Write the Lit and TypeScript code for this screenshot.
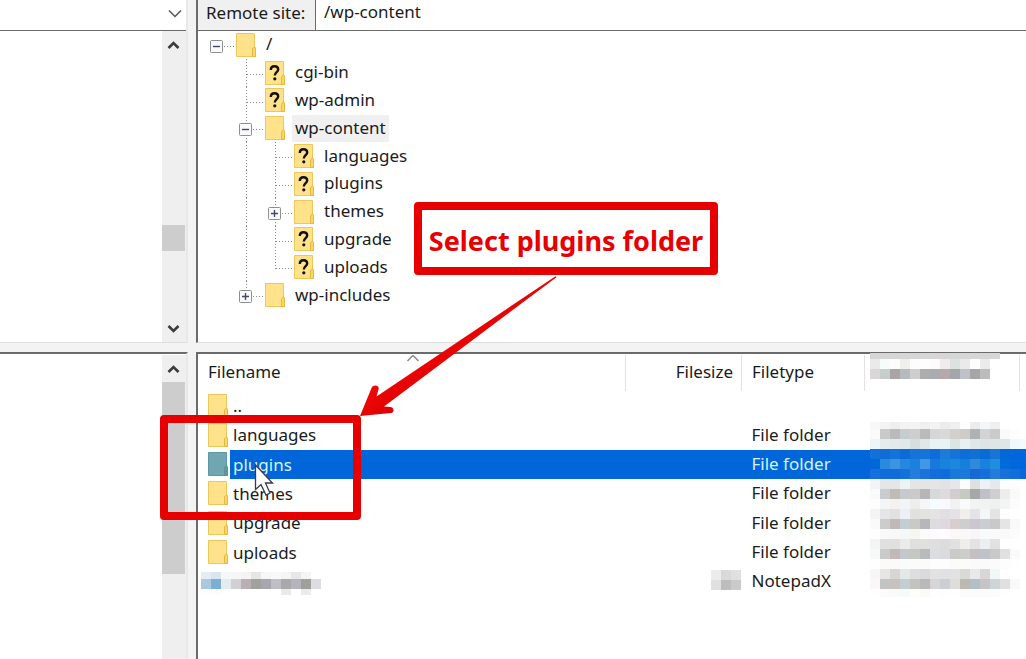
import { LitElement, html, svg, css, nothing } from "lit";
import { customElement } from "lit/decorators.js";
import { classMap } from "lit/directives/class-map.js";

type Knob = "plus" | "minus" | "";
type Guide = "line" | "gap";

interface TreeNode {
  name: string;
  guides: Guide[];
  stem: "none" | "through" | "end";
  knob: Knob;
  unknown?: boolean;
  current?: boolean;
}

const TREE: TreeNode[] = [
  { name: "/", guides: [], stem: "none", knob: "minus" },
  { name: "cgi-bin", guides: ["gap"], stem: "through", knob: "", unknown: true },
  { name: "wp-admin", guides: ["gap"], stem: "through", knob: "", unknown: true },
  { name: "wp-content", guides: ["gap"], stem: "through", knob: "minus", current: true },
  { name: "languages", guides: ["gap", "line"], stem: "through", knob: "", unknown: true },
  { name: "plugins", guides: ["gap", "line"], stem: "through", knob: "", unknown: true },
  { name: "themes", guides: ["gap", "line"], stem: "through", knob: "plus" },
  { name: "upgrade", guides: ["gap", "line"], stem: "through", knob: "", unknown: true },
  { name: "uploads", guides: ["gap", "line"], stem: "end", knob: "", unknown: true },
  { name: "wp-includes", guides: ["gap"], stem: "end", knob: "plus" },
];

const FILES = [
  { name: "..", type: "" },
  { name: "languages", type: "File folder" },
  { name: "plugins", type: "File folder", selected: true },
  { name: "themes", type: "File folder" },
  { name: "upgrade", type: "File folder" },
  { name: "uploads", type: "File folder" },
  { name: "", type: "NotepadX" },
];

/* Colour blocks of the hidden date column: top, height, then one colour per 10px cell. */
const DATE_BLOCKS: [number, number, string][] = [
  [0, 6, "d6d6d6 d6d6d6 d6d6d6 d6d6d6 d6d6d6 d6d6d6 d6d6d6 d6d6d6 d6d6d6 d6d6d6 d6d6d6 d6d6d6 d6d6d6"],
  [6, 10, "ebe9e9 f6fcfa fcfcfa efefeb fdfdfd fefefe fcfcfc f1ebec dce2df e9ebea fdfdfd ebebec"],
  [16, 10, "d9d7d7 c6cdcb aaa4a6 b4babf cdcfce adadac abacb1 b5a9ac a5a6ac bec1c8 a6a6a6 bcbcbd"],
  [69, 7, "f8f8f8 f3f3f3 eeeeee f3f3f3 f3f3f3 f0f0f0 f3f3f3 ececec f0f0f0 fefefe ececec f2f8f9 f0f0f0"],
  [76, 10, "fafafa c9c9c9 bababa c5cdcf cdcfcf bababa d5d6d8 d8d9d8 d2cfcd cfccc8 adb2b5 d3d3d3 cacaca fafafa fdfdfd"],
  [86, 10, "edf5f8 e5ecee e2eaec e0e8e9 d7dedf e1e8e8 eaf3f4 e9f2f4 dbe5e4 e8f1f2 dfe7e9 dce4e6 dde5e6 dfe6e8 f1f9fc f2fbfd"],
  [96, 10, "1170d9 0f6dd8 1273da 0c6bd8 1474da 1574da 0e6dd8 1c7cdc 1574d9 0e6ed9 1170d4 096bd5 1875d7 0268d9 0066dc 0066dc"],
  [106, 10, "0068d9 2a8ae0 3d94df 2687de 1c80dd 4199e5 1878dc 1982dd 1b87de 1380dd 308ad9 1882de 1f8de0 006bd9 0068dd 0066dc"],
  [116, 10, "176fdf 136bd9 136bd9 1571da 257cdf 1d73dc 146dda 116cdb 1c78d8 1d78da 1669d4 156eda 237cd9 1870d8 146ddc 0b66db"],
  [126, 10, "f2f4f7 e5e6e8 e4e6e7 edf3f3 e4e5e5 e4e5e5 e5e5e5 e2e3e5 e7e7e9 f9fefd dee1df edf0f5 e6e8eb fcfdfd fdfdfd"],
  [136, 10, "fafafa c8ccd0 bebcb4 c7c9cc cbcaca b8b4b8 d5d8dd e0dadd d2cecd c5cac0 a5a8a8 c1c0c8 cfcfcf ededed fafafa"],
  [146, 10, "fdfdfd f3f5f7 f5f1f1 f2f5f7 edeeec f6f6f6 f5fcff f9faff f2f2f2 fafafa f2f3f3 f1f3f2 eff0f1 f2f5f4 fcfcfc"],
  [156, 10, "f4f4f4 e5e5e7 e1e1df eceff5 e1e2df e2e2e0 e5e4e3 e1dfe3 e4e2e5 f0efeb e4e3e6 f4f6f9 e4e4e4 fefefe"],
  [166, 10, "fafafa cdcccc c0b9b8 c4cdd1 c9cac5 b6b7bb dedcdf dfd9df d7cecd cecfcc cbc6cf cbced0 c9c8ca e5e5e5 f9f9f9"],
  [176, 10, "fefefe f9f9f9 f8f8f9 f6f8f8 f5f6f0 fafbfa fdfbfd fefcfe fbf8f8 faf8f8 f8f6f9 f8fafb fafafa fafafa fcfcfc"],
  [186, 10, "f4f4f4 e1e0e1 e2dfdf ebebeb dfdfdd e0e0de dfdfdf dcdcdc e2e1e1 f0eeec e3e3e3 edeeef e1e1e1 ffffff"],
  [196, 10, "f6f9f8 cacaca c1b9b9 c4c8cd c5c7c2 b8babb dcdde2 dbdbdf cacbc7 cdcdca c3bfc2 bfc2c8 c9c9c9 e1e0df fafafa"],
  [206, 10, "fefefe fafafa fbfaf9 fafbfc fbfbf9 fbfbfb fdfdfd fdfdfd fbfbf9 fbfbfa fafafa fafafb fbfbfb fdfdfd fefefe"],
  [216, 10, "f7f5f6 e7e6e5 d6d6d5 e4e9e8 dedde0 dadadc e3e1e2 e0e1e2 e1e2e1 d9dad6 e8e9e8 d8d6d8 f2f8f8"],
  [226, 10, "fbf7f8 c2c3c2 c8c2bf c4cdd1 c2c3bf b8b9b9 d7d6d7 cccfd1 dfddda bcb8b2 b2c0c6 c6c4c7 cdd6d5 e1e0e1 f9f9f9"],
  [236, 8, "fefefe fbfbfb fafafa f7fafa fdfdf9 fafafa fefefe fdfdfd fefefe fbfbf9 f9fbfc fbfbfb fbfdfd fefefe"],
];

const NAME_BLOCKS: [number, number, string][] = [
  [0, 7, "e6edf2 dae6ee f5f8fa f8f7f7 f5f3f3 e7e6e6 f6f6f6 f8f8f8 f5f5f5 e8e7e8 f5f5f5 ffffff"],
  [7, 10, "a8cae0 7bafd4 e5ecf1 d3d0d3 bab0b4 a1a19d a8a6ae bfbec4 aba8aa b3b4bc 9f9f9b dedde3"],
  [17, 6, "fdfdfd fafcfd ffffff ffffff ffffff ffffff ffffff ffffff ebe9ea ffffff ebebe9 ffffff"],
];

const SIZE_BLOCKS: [number, number, string][] = [
  [0, 10, "ececec d9d9d9 e0e0e0"],
  [10, 10, "e0e0e0 bdbdbd cacaca"],
];

const mosaic = (cls: string, rows: [number, number, string][]) => {
  const width = Math.max(...rows.map((r) => r[2].split(" ").length)) * 10;
  const last = rows[rows.length - 1];
  const height = last[0] + last[1];
  return html`<svg class=${cls} width=${width} height=${height} shape-rendering="crispEdges" aria-hidden="true">
    ${rows.map(([y, h, cells]) =>
      cells.split(" ").map((c, i) => svg`<rect x=${i * 10} y=${y} width="10" height=${h} fill=${"#" + c}></rect>`)
    )}
  </svg>`;
};

const folder = (unknown = false, tinted = false) => html`<svg class="folder" width="20" height="24" viewBox="0 0 20 24" aria-hidden="true">
  <path d="M0.5 0.5H18.5V14L19.5 16V23.5H0.5Z" fill=${tinted ? "#6fa7b1" : "#ffe28a"} stroke=${tinted ? "#5d97a8" : "#edc65c"}></path>
  <path d="M16.5 23.5V16L18.5 13.5L19.5 15.5V23.5Z" fill=${tinted ? "#5f9a9f" : "#fbd663"} stroke=${tinted ? "#5b8f92" : "#e6b83f"}></path>
  ${unknown
    ? svg`<path d="M5.8 9C5.8 6.200 7.500 5.200 9.500 5.200C11.800 5.200 13.200 6.600 13.200 8.500C13.200 11.200 9.800 11.300 9.800 14.600" fill="none" stroke="#111" stroke-width="2.400"></path><circle cx="9.800" cy="17.800" r="1.600" fill="#111"></circle>`
    : nothing}
</svg>`;

const chevron = (dir: "up" | "down") => html`<svg width="13" height="10" viewBox="0 0 13 10" aria-hidden="true">
  <path d=${dir === "up" ? "M1.500 8L6.500 3L11.500 8" : "M1.500 2L6.500 7L11.500 2"} fill="none" stroke="#3c3c3c" stroke-width="2.600"></path>
</svg>`;

@customElement("site-tree")
class SiteTree extends LitElement {
  static styles = css`
    :host {
      display: block;
      flex: 1;
      min-width: 0;
      padding-left: 12px;
    }
    .tree {
      display: grid;
      grid-auto-rows: 1fr;
      height: 278px;
      margin: 0;
      padding: 0;
      list-style: none;
    }
    .node {
      display: flex;
      align-items: center;
      white-space: nowrap;
      min-height: 0;
    }
    .guide {
      flex: none;
      align-self: stretch;
      overflow: visible;
    }
    .folder {
      flex: none;
    }
    .label {
      margin-left: 7px;
      padding: 0 3px 2px;
      line-height: 25px;
    }
    .current {
      background: #f0f0f0;
    }
  `;

  private branch(n: TreeNode) {
    return html`<svg class="guide" width="26" height="28" aria-hidden="true">
      <g fill="none" stroke="#8a8a8a" stroke-dasharray="1 2">
        ${n.stem !== "none" ? svg`<path d=${n.stem === "through" ? "M7.500 0V28" : "M7.500 0V16"}></path>` : nothing}
        <path d="M8 15.500H25"></path>
      </g>
      ${n.knob
        ? svg`<rect x="0.500" y="9.500" width="12" height="12" rx="1" fill="#fafafa" stroke="#8e8e8e"></rect>
            <path d=${n.knob === "plus" ? "M3 15.500H10M6.500 12V19" : "M3 15.500H10"} stroke="#3f4a6b" stroke-width="1.400"></path>`
        : nothing}
    </svg>`;
  }

  render() {
    return html`<ul class="tree" role="tree">
      ${TREE.map(
        (n) => html`<li class="node" role="treeitem">
          ${n.guides.map(
            (_, i) => html`<svg class="guide" width="29" height="28" aria-hidden="true">
              ${n.guides[i + 1] === "line" || (n.guides[i] === "line" && i > 0)
                ? svg`<path d=${i > 0 ? "M7.500 0V28" : ""} stroke="#8a8a8a" stroke-dasharray="1 2"></path>`
                : nothing}
            </svg>`
          )}
          ${this.branch(n)}${folder(n.unknown)}
          <span class=${classMap({ label: true, current: !!n.current })}>${n.name}</span>
        </li>`
      )}
    </ul>`;
  }
}

@customElement("file-list")
class FileList extends LitElement {
  static styles = css`
    :host {
      display: block;
      position: relative;
    }
    .files {
      width: 100%;
      height: 241px;
      table-layout: fixed;
      border-collapse: collapse;
      white-space: nowrap;
    }
    .head {
      height: 36px;
    }
    th {
      padding: 0 10px 2px;
      font-weight: 400;
      text-align: left;
      border-right: 1px solid #e2e2e2;
    }
    td {
      padding: 0 10px;
    }
    .size {
      width: 116px;
      box-sizing: border-box;
      padding: 0 8px 2px;
      text-align: right;
    }
    .type {
      width: 123px;
      box-sizing: border-box;
    }
    .date {
      width: 155px;
      box-sizing: border-box;
    }
    .rest {
      width: 6px;
      padding: 0;
      border: 0;
    }
    .name {
      padding: 0 0 0 10px;
    }
    .entry {
      display: flex;
      align-items: center;
      height: 29px;
    }
    .folder {
      flex: none;
      margin-right: 2px;
    }
    .text {
      flex: 1;
      padding-left: 3px;
      line-height: 29px;
    }
    .selected td {
      color: #d5f4ff;
      background: #0066da;
    }
    .selected .name {
      background: none;
    }
    .selected .text {
      background: #0066da;
    }
    .sort {
      position: absolute;
      top: 0;
      left: 208px;
    }
    .dates {
      position: absolute;
      top: -2px;
      right: -4px;
    }
    .hidden-name {
      position: absolute;
      top: 217px;
      left: 3px;
    }
    .hidden-size {
      position: absolute;
      top: 215px;
      right: 285px;
    }
  `;

  render() {
    return html`
      <table class="files">
        <thead>
          <tr class="head">
            <th>Filename</th>
            <th class="size">Filesize</th>
            <th class="type">Filetype</th>
            <th class="date"></th>
            <th class="rest"></th>
          </tr>
        </thead>
        <tbody>
          ${FILES.map(
            (f) => html`<tr class=${classMap({ selected: !!f.selected })}>
              <td class="name">
                <div class="entry">${f.name ? folder(false, f.selected) : nothing}<span class="text">${f.name}</span></div>
              </td>
              <td class="size"></td>
              <td>${f.type}</td>
              <td></td>
              <td class="rest"></td>
            </tr>`
          )}
        </tbody>
      </table>
      <svg class="sort" width="14" height="8" viewBox="0 0 14 8" aria-hidden="true">
        <path d="M1.500 6L7 0.500L12.500 6" fill="none" stroke="#8b8b8b" stroke-width="1.500"></path>
      </svg>
      ${mosaic("dates", DATE_BLOCKS)} ${mosaic("hidden-name", NAME_BLOCKS)} ${mosaic("hidden-size", SIZE_BLOCKS)}
    `;
  }
}

@customElement("app-root")
class AppRoot extends LitElement {
  static styles = css`
    :host {
      display: block;
      position: relative;
      height: 100vh;
      overflow: hidden;
      background: #f3f3f3;
      color: #1b1b1b;
      font: 17px/24px "Noto Sans", "Open Sans", sans-serif;
    }
    .window {
      display: grid;
      grid-template-columns: 188px minmax(0, 1fr);
      grid-template-rows: 343px minmax(0, 1fr);
      column-gap: 8px;
      row-gap: 9px;
      height: 100%;
    }
    .pane {
      display: flex;
      flex-direction: column;
      min-width: 0;
      min-height: 0;
      box-sizing: border-box;
      background: #fff;
    }
    .local {
      border-right: 2px solid #e8e8e8;
    }
    .remote {
      border-left: 2px solid #6b6b6b;
    }
    .upper {
      border-bottom: 1px solid #dedede;
    }
    .lower {
      border-top: 2px solid #6b6b6b;
      padding-top: 1px;
    }
    .bar {
      display: flex;
      flex: none;
      height: 30px;
      box-sizing: content-box;
      border-bottom: 1px solid #6b6b6b;
    }
    .drop {
      position: relative;
      display: flex;
      flex: 1;
    }
    .drop select {
      flex: 1;
      border: 0;
      background: none;
      appearance: none;
    }
    .drop svg {
      position: absolute;
      right: 4px;
      top: 9px;
      pointer-events: none;
    }
    .site {
      flex: none;
      box-sizing: border-box;
      width: 118px;
      padding: 0 8px;
      line-height: 25px;
      background: #f0f0f0;
      border-right: 1px solid #6b6b6b;
      white-space: nowrap;
    }
    .path {
      flex: 1;
      min-width: 0;
      padding: 0 8px;
      height: 24px;
      border: 0;
      outline: 0;
      background: none;
      color: inherit;
      font: inherit;
    }
    .body {
      display: flex;
      flex: 1;
      min-height: 0;
      justify-content: flex-end;
    }
    .scroll {
      display: flex;
      flex-direction: column;
      width: 24px;
      background: #efefef;
    }
    .arrow {
      display: flex;
      flex: none;
      align-items: center;
      justify-content: center;
      width: 22px;
      height: 27px;
      padding: 0;
      border: 0;
      background: none;
    }
    .thumb {
      flex: none;
      width: 23px;
      background: #cdcdcd;
    }
    .short {
      height: 26px;
    }
    .long {
      height: 192px;
    }
    .before {
      flex: 13;
    }
    .after {
      flex: 5;
    }
    .overlay {
      position: absolute;
      inset: 0;
      pointer-events: none;
    }
    .mark {
      position: absolute;
      box-sizing: border-box;
      border: 8px solid #e60000;
      border-radius: 4px;
    }
    .target {
      left: 160px;
      top: 415px;
      width: 201px;
      height: 105px;
    }
    .callout {
      left: 414px;
      top: 202px;
      width: 304px;
      height: 73px;
      background: #fff;
      color: #e60000;
      font-size: 27px;
      font-weight: 700;
      line-height: 62px;
      text-align: center;
      white-space: nowrap;
    }
    .ink {
      position: absolute;
      left: 0;
      top: 0;
    }
  `;

  render() {
    return html`
      <main class="window">
        <section class="pane local upper">
          <div class="bar">
            <div class="drop">
              <select aria-label="Local site"></select>
              <svg width="14" height="9" viewBox="0 0 14 9" aria-hidden="true">
                <path d="M1 1.500L7 7.500L13 1.500" fill="none" stroke="#555" stroke-width="1.500"></path>
              </svg>
            </div>
          </div>
          <div class="body">
            <div class="scroll">
              <button class="arrow" aria-label="Up">${chevron("up")}</button>
              <div class="before"></div>
              <div class="thumb short"></div>
              <div class="after"></div>
              <button class="arrow" aria-label="Down">${chevron("down")}</button>
            </div>
          </div>
        </section>
        <section class="pane remote upper">
          <div class="bar">
            <label class="site" for="path">Remote site:</label>
            <input class="path" id="path" type="text" value="/wp-content" />
          </div>
          <div class="body"><site-tree></site-tree></div>
        </section>
        <section class="pane local lower">
          <div class="body">
            <div class="scroll">
              <button class="arrow" aria-label="Up">${chevron("up")}</button>
              <div class="thumb long"></div>
            </div>
          </div>
        </section>
        <section class="pane remote lower"><file-list></file-list></section>
      </main>
      <div class="overlay">
        <svg class="ink" width="600" height="520" aria-hidden="true">
          <path d="M255.500 465V489.500L261 484.500L266 495L270 493L265.500 483H272.500Z" fill="#fff" stroke="#3a3a4a" stroke-width="1.300"></path>
        </svg>
        <div class="mark target"></div>
        <div class="mark callout">Select plugins folder</div>
        <svg class="ink" width="600" height="520" aria-hidden="true">
          <defs>
            <linearGradient id="red" x1="0" y1="0" x2="1" y2="1">
              <stop offset="0.400" stop-color="#f50808"></stop>
              <stop offset="0.600" stop-color="#d90000"></stop>
            </linearGradient>
          </defs>
          <path d="M555.500 276.200L376.500 396.500L378.500 389.500C380 385 373 384 371.500 388L360 416L391 413C395 412 394 407 390 407L384 406.500L556.500 277.200Z" fill="url(#red)"></path>
        </svg>
      </div>
    `;
  }
}
